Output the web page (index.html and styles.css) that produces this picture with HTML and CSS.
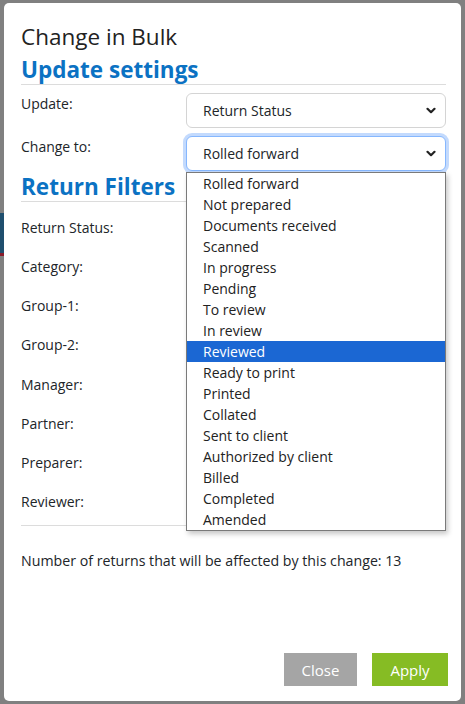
FILE: index.html
```html
<!DOCTYPE html>
<html lang="en">
<head>
<meta charset="utf-8">
<title>Change in Bulk</title>
<link rel="stylesheet" href="styles.css">
</head>
<body>
<div class="backdrop">
  <div class="bg-bar bg-blue-left"></div>
  <div class="bg-bar bg-red-left"></div>
  <div class="modal">
    <div class="modal-body">
      <h1 class="title">Change in Bulk</h1>
      <h2 class="section">Update settings</h2>
      <div class="rows top-rows">
        <div class="row">
          <div class="label">Update:</div>
          <div class="select">
            <span>Return Status</span>
            <svg class="chev" viewBox="0 0 10 7" width="10" height="7"><path d="M1.5 1.8 L5 5.2 L8.5 1.8" fill="none" stroke="#222" stroke-width="2.2" stroke-linecap="round" stroke-linejoin="round"/></svg>
          </div>
        </div>
        <div class="row">
          <div class="label">Change to:</div>
          <div class="select-wrap">
            <div class="select focused">
              <span>Rolled forward</span>
              <svg class="chev" viewBox="0 0 10 7" width="10" height="7"><path d="M1.5 1.8 L5 5.2 L8.5 1.8" fill="none" stroke="#222" stroke-width="2.2" stroke-linecap="round" stroke-linejoin="round"/></svg>
            </div>
            <ul class="dropdown">
              <li>Rolled forward</li>
              <li>Not prepared</li>
              <li>Documents received</li>
              <li>Scanned</li>
              <li>In progress</li>
              <li>Pending</li>
              <li>To review</li>
              <li>In review</li>
              <li class="active">Reviewed</li>
              <li>Ready to print</li>
              <li>Printed</li>
              <li>Collated</li>
              <li>Sent to client</li>
              <li>Authorized by client</li>
              <li>Billed</li>
              <li>Completed</li>
              <li>Amended</li>
            </ul>
          </div>
        </div>
      </div>
      <h2 class="section filters">Return Filters</h2>
      <div class="rows filter-rows">
        <div class="frow"><div class="label">Return Status:</div></div>
        <div class="frow"><div class="label">Category:</div></div>
        <div class="frow"><div class="label">Group-1:</div></div>
        <div class="frow"><div class="label">Group-2:</div></div>
        <div class="frow"><div class="label">Manager:</div></div>
        <div class="frow"><div class="label">Partner:</div></div>
        <div class="frow"><div class="label">Preparer:</div></div>
        <div class="frow"><div class="label">Reviewer:</div></div>
      </div>
      <div class="divider"></div>
      <p class="count">Number of returns that will be affected by this change: 13</p>
    </div>
    <div class="modal-footer">
      <button class="btn btn-close">Close</button>
      <button class="btn btn-apply">Apply</button>
    </div>
  </div>
</div>
</body>
</html>
```

FILE: styles.css
```css
* { box-sizing: border-box; }
html, body { margin: 0; padding: 0; }
body {
  font-family: "Open Sans", "Noto Sans", "Liberation Sans", sans-serif;
  color: #212529;
  background: #808080;
  width: 465px;
  height: 704px;
  overflow: hidden;
}
.backdrop {
  position: relative;
  width: 465px;
  height: 704px;
  padding: 3px 4px 3px 4px;
  display: flex;
}
.bg-bar { position: absolute; left: 0; width: 4px; }
.bg-blue-left { top: 213px; height: 40px; background: #1f4f6e; }
.bg-red-left { top: 253px; height: 3px; background: #8a1c2b; }
.modal {
  position: relative;
  flex: 1;
  background: #fff;
  border-radius: 5px;
  display: flex;
  flex-direction: column;
}
.modal-body {
  flex: 1;
  padding: 19px 15px 0 17px;
}
.title {
  margin: 0;
  font-size: 22.5px;
  font-weight: 400;
  line-height: 30px;
  color: #222;
}
.section {
  margin: 4px 0 0 0;
  font-size: 22.5px;
  font-weight: 700;
  line-height: 28px;
  color: #0b72c3;
  border-bottom: 1px solid #dcdcdc;
}
.rows { display: flex; flex-direction: column; }
.top-rows { padding-top: 8px; gap: 8px; }
.row { display: flex; align-items: flex-start; }
.label {
  width: 165px;
  font-size: 14px;
  line-height: 22px;
}
.select, .select-wrap { width: 260px; }
.select-wrap { position: relative; }
.select {
  height: 35px;
  border: 1px solid #d4d4d4;
  border-radius: 6px;
  display: flex;
  align-items: center;
  justify-content: space-between;
  padding: 0 9px 0 16px;
  font-size: 14px;
  background: #fff;
}
.select.focused {
  border-color: #86b7fe;
  box-shadow: 0 0 0 3px #c3dafd;
}
.chev { display: block; }
.dropdown {
  position: absolute;
  left: 0;
  top: 36px;
  width: 260px;
  margin: 0;
  padding: 0;
  list-style: none;
  background: #fff;
  border: 1px solid #7a7a7a;
  box-shadow: 2px 3px 5px rgba(0,0,0,0.22);
  z-index: 5;
}
.dropdown li {
  height: 21px;
  line-height: 21px;
  font-size: 14px;
  padding-left: 16px;
  color: #222;
}
.dropdown li.active { background: #1b67d3; color: #fff; }
.filters { margin-top: 2px; }
.filter-rows { padding-top: 14.5px; gap: 5.25px; }
.frow { height: 34px; display: flex; }
.divider { height: 1px; background: #dcdcdc; }
.count {
  margin: 24px 0 0 0;
  font-size: 14.2px;
  line-height: 22px;
}
.modal-footer {
  display: flex;
  justify-content: flex-end;
  gap: 15px;
  padding: 0 13px 15px 0;
}
.btn {
  border: 0;
  border-radius: 0;
  height: 33px;
  font-family: inherit;
  font-size: 15px;
  color: #fff;
  padding: 0;
}
.btn-close { width: 73px; background: #a5a5a5; }
.btn-apply { width: 76px; background: #86bc24; }
```
